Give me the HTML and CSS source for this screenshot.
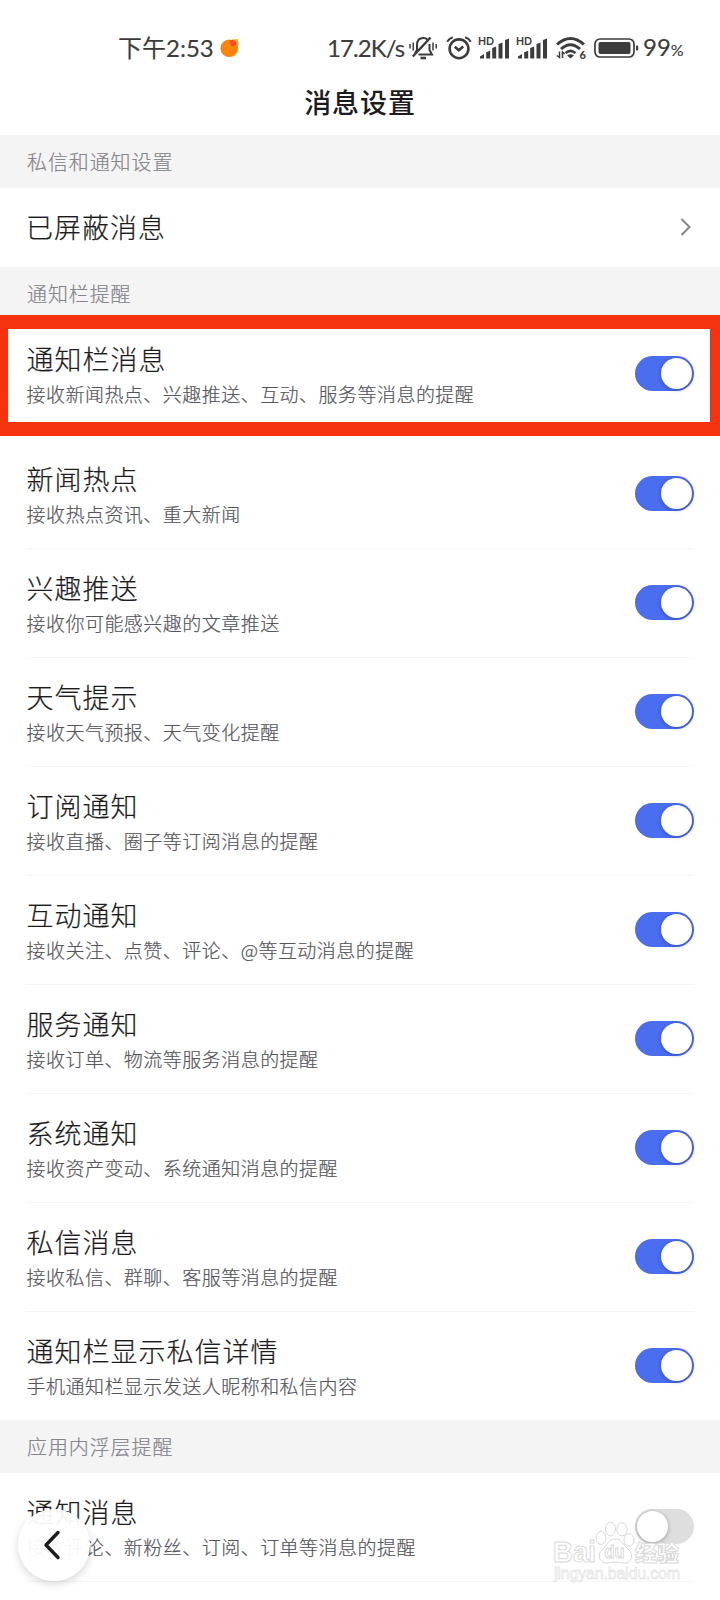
FILE: index.html
```
<!DOCTYPE HTML>
<html lang="zh-CN">

<head>
    <meta charset="utf-8">
    <title>消息设置</title>
    <link rel="stylesheet" href="styles.css">
</head>

<body>

    <div class="status">
        <span class="time">下午2:53</span>
        <svg class="dot" width="20" height="20" viewBox="0 0 20 20">
            <path d="M12 1.5 L18 1 L18.4 8Z" fill="#ffb52e"/>
            <circle cx="9.3" cy="10.2" r="8.8" fill="#fb8409"/>
            <path d="M9.5 2.5 Q14 .5 16.5 4.5 Q16 8.5 12 8.5 Q9.5 6.5 9.5 2.5Z" fill="#fb4a2b"/>
        </svg>
        <span class="speed">17.2K/s</span>
        <svg class="mute" width="28" height="24" viewBox="0 0 28 24" fill="none" stroke="#3c3c3c" stroke-width="2">
            <path d="M6 17 L8 14 V9 Q8 2 14.2 2 Q17 2 18.5 3.5 M20.5 8 V14 L23 18.5 H9.5"/>
            <path d="M3.8 20.5 L21.5 1.5" stroke-width="2.4"/>
            <path d="M11.5 22 H17" stroke-width="2.6"/>
            <path d="M1 8 V12.5 M4.2 6.5 V14.5 M24 6.5 V14.5 M27.2 8 V12.5" stroke-width="1.5"/>
        </svg>
        <svg class="alarm" width="26" height="24" viewBox="0 0 26 24" fill="none" stroke="#3c3c3c" stroke-width="2.6">
            <circle cx="13" cy="12.8" r="9.4"/>
            <path d="M8.8 10.8 L12.8 14.2 L17.2 10.5"/>
            <path d="M1.2 5.8 Q3 2.5 6.8 1.2 M24.8 5.8 Q23 2.5 19.2 1.2" stroke-width="2"/>
        </svg>
        <svg class="signal" width="32" height="26" viewBox="0 0 32 26" fill="#3c3c3c">
            <text x="0" y="10">HD</text>
            <path d="M2 23.500 V21.500 L6 19 V23.500Z M8.200 23.500 V17.300 L12.200 15.700 V23.500Z M14.200 23.500 V13 L18.200 11.500 V23.500Z M20.500 23.500 V9 L24.500 7.500 V23.500Z M27 23.500 V5 L31 3.500 V23.500Z"/>
        </svg>
        <svg class="signal second" width="32" height="26" viewBox="0 0 32 26" fill="#3c3c3c">
            <text x="0" y="10">HD</text>
            <path d="M2 23.500 V21.500 L6 19 V23.500Z M8.200 23.500 V17.300 L12.200 15.700 V23.500Z M14.200 23.500 V13 L18.200 11.500 V23.500Z M20.500 23.500 V9 L24.500 7.500 V23.500Z M27 23.500 V5 L31 3.500 V23.500Z"/>
        </svg>
        <svg class="wifi" width="31" height="24" viewBox="0 0 31 24" fill="none" stroke="#3c3c3c" stroke-width="3">
            <path d="M1 8.5 Q14.5 -3.5 28 8.5"/>
            <path d="M5 13 Q14.5 4.5 24 13"/>
            <path d="M9.5 17.2 Q14.5 12.5 19.5 17.2" stroke-width="2.5"/>
            <path d="M11 19.5 Q14.5 17 18 19.5 L14.5 22.5Z" fill="#3c3c3c" stroke="none"/>
            <path d="M3.5 15.5 V21.5 L1 19.5 M6.5 22 V16 L8.5 18" stroke-width="1.5"/>
            <text class="six" x="23.5" y="22.5">6</text>
        </svg>
        <svg class="battery" width="45" height="20" viewBox="0 0 45 20">
            <rect x="1" y="1" width="39" height="18" rx="5" fill="none" stroke="#3c3c3c" stroke-width="1.7"/>
            <rect x="4.5" y="4" width="32" height="12" rx="2" fill="#3c3c3c"/>
            <rect x="42" y="7.5" width="2.2" height="5" rx="1" fill="#3c3c3c"/>
        </svg>
        <span class="level">99<small>%</small></span>
    </div>

    <h1>消息设置</h1>

    <h2>私信和通知设置</h2>
    <div class="link">
        <span class="name">已屏蔽消息</span>
        <svg width="12" height="18" viewBox="0 0 12 18" fill="none" stroke="#858585" stroke-width="2">
            <path d="M1.5 1 L9.5 9 L1.5 17"/>
        </svg>
    </div>

    <h2>通知栏提醒</h2>
    <div class="row main">
        <div class="text">
            <div class="name">通知栏消息</div>
            <div class="desc">接收新闻热点、兴趣推送、互动、服务等消息的提醒</div>
        </div>
        <div class="toggle on"></div>
        <div class="mark"></div>
    </div>

    <div class="row">
        <div class="text">
            <div class="name">新闻热点</div>
            <div class="desc">接收热点资讯、重大新闻</div>
        </div>
        <div class="toggle on"></div>
    </div>
    <div class="row">
        <div class="text">
            <div class="name">兴趣推送</div>
            <div class="desc">接收你可能感兴趣的文章推送</div>
        </div>
        <div class="toggle on"></div>
    </div>
    <div class="row">
        <div class="text">
            <div class="name">天气提示</div>
            <div class="desc">接收天气预报、天气变化提醒</div>
        </div>
        <div class="toggle on"></div>
    </div>
    <div class="row">
        <div class="text">
            <div class="name">订阅通知</div>
            <div class="desc">接收直播、圈子等订阅消息的提醒</div>
        </div>
        <div class="toggle on"></div>
    </div>
    <div class="row">
        <div class="text">
            <div class="name">互动通知</div>
            <div class="desc">接收关注、点赞、评论、@等互动消息的提醒</div>
        </div>
        <div class="toggle on"></div>
    </div>
    <div class="row">
        <div class="text">
            <div class="name">服务通知</div>
            <div class="desc">接收订单、物流等服务消息的提醒</div>
        </div>
        <div class="toggle on"></div>
    </div>
    <div class="row">
        <div class="text">
            <div class="name">系统通知</div>
            <div class="desc">接收资产变动、系统通知消息的提醒</div>
        </div>
        <div class="toggle on"></div>
    </div>
    <div class="row">
        <div class="text">
            <div class="name">私信消息</div>
            <div class="desc">接收私信、群聊、客服等消息的提醒</div>
        </div>
        <div class="toggle on"></div>
    </div>
    <div class="row last">
        <div class="text">
            <div class="name">通知栏显示私信详情</div>
            <div class="desc">手机通知栏显示发送人昵称和私信内容</div>
        </div>
        <div class="toggle on"></div>
    </div>

    <h2>应用内浮层提醒</h2>
    <div class="row">
        <div class="text">
            <div class="name">通知消息</div>
            <div class="desc">接收评论、新粉丝、订阅、订单等消息的提醒</div>
        </div>
        <div class="toggle"></div>
    </div>

    <div class="back">
        <svg width="18" height="30" viewBox="0 0 18 30" fill="none" stroke="#1c1c1e" stroke-width="3.4" stroke-linecap="round" stroke-linejoin="round">
            <path d="M15 2.5 L3 15 L15 27.5"/>
        </svg>
    </div>

    <svg class="watermark" width="140" height="70" viewBox="0 0 140 70">
        <text class="logo" x="3" y="42" textLength="43" lengthAdjust="spacingAndGlyphs">Bai</text>
        <g>
            <ellipse cx="51" cy="18" rx="5" ry="6.5"/>
            <ellipse cx="60.5" cy="9" rx="5" ry="6.8"/>
            <ellipse cx="72" cy="9.5" rx="5.2" ry="6.5"/>
            <ellipse cx="79" cy="20" rx="5" ry="6.3"/>
            <path d="M65 19 C58 19 57 26 52 30 C47 34 49 43 57 43 C61 43 62 42 65 42 C69 42 71 43 75 43 C82 43 84 34 78 29 C73 25 72 19 65 19Z"/>
        </g>
        <text class="du" x="54.5" y="38" textLength="20" lengthAdjust="spacingAndGlyphs">du</text>
        <text class="cn" x="85" y="40.5" textLength="44">经验</text>
        <text class="url" x="4" y="59" textLength="126">jingyan.baidu.com</text>
    </svg>

</body>

</html>
```
FILE: styles.css
```
body {
    position: relative;
    width: 720px;
    height: 1600px;
    margin: 0;
    overflow: hidden;
    background: #fff;
    color: #1c1c1e;
    font-family: "Noto Sans CJK SC", sans-serif;
    font-weight: 300;
}

/* строка состояния */

.status {
    display: flex;
    align-items: center;
    height: 48px;
    padding: 24px 0 0 118px;
    color: #3c3c3c;
    font-family: Lato, "Noto Sans CJK SC", sans-serif;
    font-size: 24px;
    font-weight: 400;
    line-height: 48px;
    white-space: nowrap;
    -webkit-text-stroke: 0.15px #3c3c3c;
}

.status svg {
    flex: none;
    -webkit-text-stroke: 0;
}

.time {
    width: 102px;
}

.speed {
    width: 81px;
    margin-left: 87px;
    letter-spacing: -0.9px;
}

.mute {
    margin-left: 1px;
}

.alarm {
    margin-left: 9px;
}

.signal {
    margin-left: 6px;
}

.second {
    margin-left: 6px;
}

.signal text {
    font: 700 10.5px Lato, sans-serif;
}

.wifi {
    margin-left: 8px;
}

.six {
    font: 900 11px Lato, sans-serif;
    fill: #3c3c3c;
    stroke: none;
}

.battery {
    margin-left: 7px;
}

.level {
    margin-left: 4px;
}

.level small {
    font-size: 16px;
}

h1 {
    height: 63px;
    margin: 0;
    font-size: 27px;
    font-weight: 500;
    line-height: 60px;
    letter-spacing: 0.9px;
    text-align: center;
}

h2 {
    height: 53px;
    margin: 0;
    padding: 0 27px;
    background: #f4f4f5;
    color: #85858d;
    font-size: 20px;
    font-weight: 300;
    line-height: 53px;
    letter-spacing: 0.9px;
    -webkit-text-stroke: 0.2px #85858d;
}

.link {
    display: flex;
    align-items: center;
    justify-content: space-between;
    box-sizing: border-box;
    height: 79px;
    padding: 0 28px 2px 26px;
}

.name {
    font-size: 27px;
    line-height: 39px;
    letter-spacing: 1px;
    -webkit-text-stroke: 0.2px #1c1c1e;
}

.desc {
    color: #55565c;
    font-size: 19px;
    line-height: 32px;
    letter-spacing: 0.47px;
    -webkit-text-stroke: 0.2px #55565c;
}

.row {
    display: flex;
    align-items: center;
    justify-content: space-between;
    box-sizing: border-box;
    height: 109px;
    margin: 0 26px;
    padding-bottom: 1px;
    border-bottom: 1px solid #f5f5f6;
}

.text {
    padding: 2px 0 0 0.5px;
}

.main {
    position: relative;
    margin-bottom: 11px;
    padding-bottom: 3px;
    border: 0;
}

.last {
    border: 0;
    height: 108px;
}

/* красная рамка вокруг первой настройки */

.mark {
    position: absolute;
    top: -5px;
    left: -26px;
    box-sizing: border-box;
    width: 720px;
    height: 121px;
    border: solid #f7330f;
    border-width: 14px 10px 14px 8px;
}

.toggle {
    box-sizing: border-box;
    width: 59px;
    height: 35px;
    padding: 2px;
    border-radius: 18px;
    background: #dedede;
}

.toggle::before {
    content: "";
    display: block;
    width: 31px;
    height: 31px;
    border-radius: 50%;
    background: #fff;
    box-shadow: 0 1px 4px rgba(0, 0, 0, 0.3);
}

.on {
    background: #4b6def;
}

.on::before {
    margin-left: 24px;
}

.back {
    position: absolute;
    left: 18px;
    top: 1509px;
    display: flex;
    align-items: center;
    justify-content: center;
    width: 72px;
    height: 72px;
    border-radius: 50%;
    background: rgba(255, 255, 255, 0.95);
    box-shadow: 0 3px 8px rgba(0, 0, 0, 0.16);
}

.back svg {
    margin-right: 4px;
}

.watermark {
    position: absolute;
    left: 550px;
    top: 1520px;
    fill: #fff;
    stroke: #d9d9d9;
    stroke-width: 1px;
}

.logo {
    font: 700 30px "Liberation Sans", sans-serif;
}

.du {
    font: 700 18px "Liberation Sans", sans-serif;
}

.cn {
    font: 900 22px "Noto Sans CJK SC", sans-serif;
}

.url {
    font: 400 16px "Liberation Sans", sans-serif;
    stroke: #e6e6e6;
    stroke-width: 0.8px;
}
```
